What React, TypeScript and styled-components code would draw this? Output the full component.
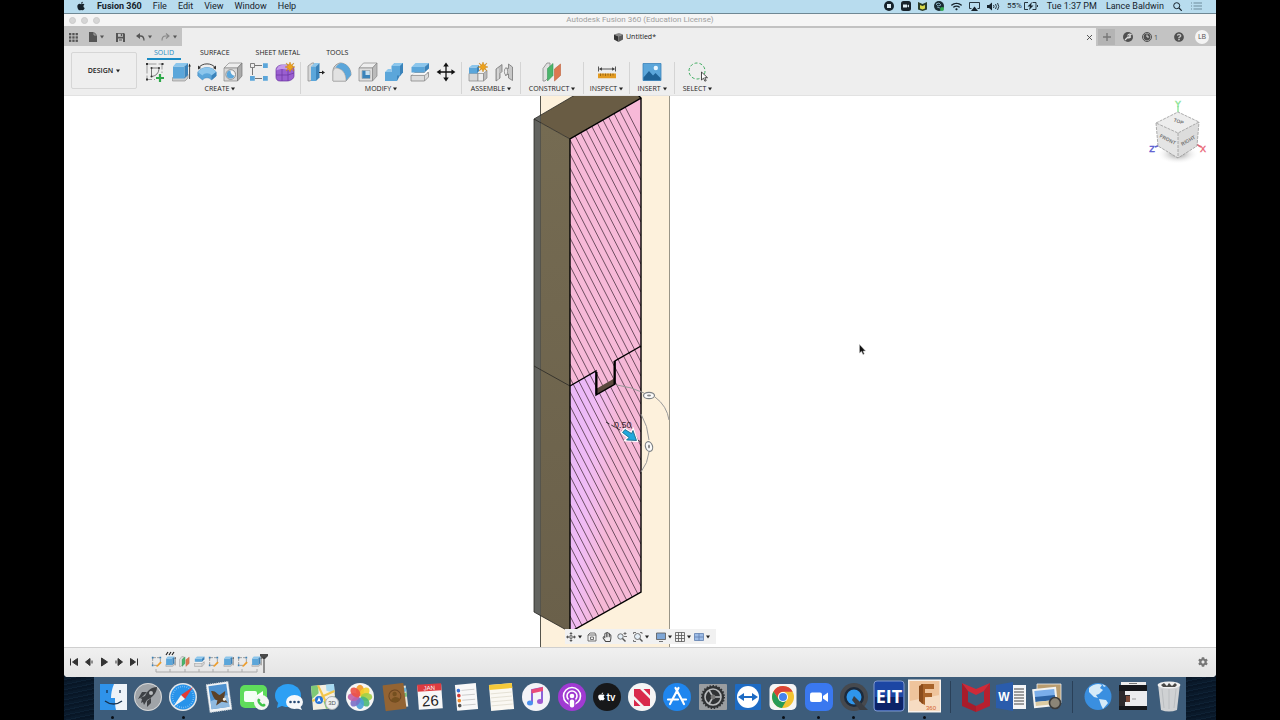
import React from 'react';
import styled, { createGlobalStyle } from 'styled-components';
import { FaApple, FaWifi, FaCog, FaQuestionCircle, FaRegHandPaper } from 'react-icons/fa';

const Global = createGlobalStyle`
  * { box-sizing: border-box; }
  body { margin: 0; background: #000; overflow: hidden; }
  button { border: 0; background: none; padding: 0; margin: 0; color: inherit; font: inherit; }
  svg { display: block; flex: none; }
`;

const system = "Roboto, 'Liberation Sans', sans-serif";
const product = "'Open Sans', 'Noto Sans', sans-serif";

const Screen = styled.div`
  display: flex;
  flex-direction: column;
  min-height: 100vh;
  margin: 0 5%;
  font-family: ${product};
  font-size: 7px;
  color: #222;
  background: #0b1c2e;
`;

/* ---------- system menu bar ---------- */

const MenuBar = styled.header`
  display: flex;
  align-items: center;
  justify-content: space-between;
  height: 14px;
  padding: 0 14px 1px 12px;
  font-family: ${system};
  font-size: 9px;
  line-height: 12px;
  color: #16222b;
  background: #b8dcee;
  border-bottom: 1px solid #6f8894;
`;

const MenuList = styled.nav`
  display: flex;
  align-items: center;
  gap: 11px;
`;

const MenuItem = styled.button<{ $strong?: boolean }>`
  font-weight: ${p => (p.$strong ? 700 : 400)};
  white-space: nowrap;
`;

const StatusList = styled.div<{ $gap: number }>`
  display: flex;
  align-items: center;
  gap: ${p => p.$gap}px;
`;

const Percent = styled.span`
  font-size: 8px;
`;

/* ---------- window chrome ---------- */

const Window = styled.main`
  flex: 1;
  display: flex;
  flex-direction: column;
  background: #eee;
  border-radius: 0 0 4px 4px;
  overflow: hidden;
`;

const TitleBar = styled.div`
  display: grid;
  grid-template-columns: 1fr auto 1fr;
  align-items: center;
  height: 14px;
  padding: 0 5px;
  background: #f5f5f5;
  border-bottom: 2px solid #c2c2c2;
`;

const Lights = styled.div`
  display: flex;
  gap: 5px;
`;

const Light = styled.button`
  width: 7px;
  height: 7px;
  border-radius: 50%;
  background: #d6d6d6;
  border: 1px solid #cbcbcb;
`;

const Title = styled.h1`
  margin: 0;
  font: 400 8px/12px ${system};
  color: #a0a0a0;
`;

const TabBar = styled.div`
  display: flex;
  height: 18px;
  background: #c3c3c3;
`;

const QuickTools = styled.div`
  display: flex;
  align-items: center;
  width: 118px;
  padding-left: 5px;
  color: #555;
`;

const QuickTool = styled.button<{ $after: number }>`
  display: flex;
  align-items: center;
  gap: 3px;
  margin-right: ${p => p.$after}px;
`;

const DocumentTab = styled.div`
  flex: 1;
  display: grid;
  grid-template-columns: 1fr auto 1fr;
  align-items: center;
  padding: 0 2px 0 0;
  background: #eee;
`;

const DocumentName = styled.span`
  grid-column: 2;
  display: flex;
  align-items: center;
  gap: 3px;
  margin-right: 6px;
  font-size: 7px;
  line-height: 10px;
  color: #222;
`;

const CloseButton = styled.button`
  justify-self: end;
  padding: 2px;
`;

const AccountTools = styled.div`
  display: flex;
  align-items: center;
  gap: 8px;
  width: 120px;
  padding: 0 7px 0 2px;
  color: #505050;
`;

const AddTab = styled.button`
  display: grid;
  place-items: center;
  width: 17px;
  height: 16px;
  background: #b4b4b4;
`;

const Jobs = styled.button`
  display: flex;
  align-items: center;
  gap: 2px;
  margin: 0 8px 0 1px;
`;

const Avatar = styled.button`
  width: 14px;
  height: 14px;
  margin-left: auto;
  border-radius: 50%;
  background: #f4f4f4;
  line-height: 14px;
  text-align: center;
`;

/* ---------- ribbon ---------- */

const Ribbon = styled.section`
  display: flex;
  height: 50px;
  padding-left: 7px;
  background: #eee;
  border-bottom: 1px solid #e2e2e2;
`;

const Workspace = styled.button`
  display: flex;
  align-items: center;
  justify-content: center;
  gap: 3px;
  width: 66px;
  height: 37px;
  margin: 6px 3px 0 0;
  font-weight: 600;
  border: 1px solid #d6d6d6;
  border-radius: 2px;
`;

const RibbonBody = styled.div`
  display: flex;
  flex-direction: column;
`;

const RibbonTabs = styled.div`
  display: flex;
  gap: 12px;
  height: 14px;
  padding-left: 7px;
`;

const RibbonTab = styled.button<{ $active?: boolean }>`
  height: 14px;
  padding: 2px 7px 0;
  line-height: 10px;
  white-space: nowrap;
  color: ${p => (p.$active ? '#1c8cc4' : '#222')};
  border-bottom: 2px solid ${p => (p.$active ? '#1c8cc4' : 'transparent')};
`;

const Groups = styled.div`
  display: flex;
  padding-top: 2px;
`;

const Group = styled.div<{ $width: number; $last?: boolean }>`
  display: flex;
  flex-direction: column;
  align-items: center;
  width: ${p => p.$width}px;
  height: 32px;
  border-right: 1px solid ${p => (p.$last ? 'transparent' : '#d4d4d4')};
`;

const GroupIcons = styled.div`
  display: flex;
`;

const IconButton = styled.button`
  display: grid;
  place-items: center;
  width: 26px;
  height: 20px;
`;

const GroupLabel = styled.button`
  display: flex;
  align-items: center;
  gap: 2px;
  padding-top: 2px;
  font-weight: 500;
  line-height: 10px;
  white-space: nowrap;
`;

/* ---------- viewport ---------- */

const Viewport = styled.section`
  position: relative;
  flex: 1;
  min-height: 551px;
  overflow: hidden;
  background: #fff;
`;

const Model = styled.svg`
  position: absolute;
  top: 0;
  left: calc(50% - 110px);
`;

const ViewCube = styled.svg`
  position: absolute;
  top: 2px;
  right: 8px;
`;

const Pointer = styled.svg`
  position: absolute;
  top: 248px;
  left: calc(50% + 219px);
`;

const NavBar = styled.div`
  position: absolute;
  bottom: 3px;
  left: calc(50% - 75px);
  display: flex;
  align-items: center;
  width: 151px;
  height: 15px;
  padding: 0 1px;
  background: #f1f1f1;
`;

const NavButton = styled.button<{ $after: number }>`
  display: flex;
  align-items: center;
  gap: 2px;
  margin-right: ${p => p.$after}px;
`;

/* ---------- timeline ---------- */

const Timeline = styled.footer`
  display: flex;
  align-items: center;
  height: 30px;
  padding: 0 8px 2px 4px;
  color: #333;
  background: linear-gradient(#f0f0f0, #e4e4e4);
  border-top: 1px solid #cfcfcf;
`;

const Playback = styled.div`
  display: flex;
  gap: 3px;
  margin-right: 10px;
`;

const PlayButton = styled.button`
  display: grid;
  place-items: center;
  width: 12px;
  height: 12px;
`;

const History = styled.div`
  position: relative;
  display: flex;
  align-items: center;
  justify-content: space-between;
  width: 113px;
  height: 18px;
`;

const HistoryButton = styled.button`
  display: grid;
  place-items: center;
  width: 12px;
  height: 12px;
`;

const HistoryRail = styled.svg`
  position: absolute;
  left: 0;
  top: -3px;
  pointer-events: none;
`;

const Settings = styled.button`
  margin-left: auto;
  color: #777;
`;

/* ---------- dock ---------- */

const Desktop = styled.div`
  height: 43px;
  padding: 0 30px;
  background: repeating-linear-gradient(168deg, #0a1a2b 0 2px, #0e2134 2px 3px, #081626 3px 5px);
`;

const Dock = styled.nav`
  display: flex;
  height: 43px;
  padding: 4px 0 0 1px;
  background: #3d5c7a;
`;

const DockItem = styled.button<{ $running?: boolean }>`
  flex: 35 1 0;
  display: flex;
  flex-direction: column;
  align-items: center;
  gap: 3px;
  &::after {
    content: '';
    width: 3px;
    height: 3px;
    border-radius: 50%;
    background: ${p => (p.$running ? '#0a0f16' : 'transparent')};
  }
`;

const DockDivider = styled.span`
  flex: 16 1 0;
  display: flex;
  justify-content: center;
  &::before {
    content: '';
    width: 1px;
    height: 32px;
    background: #2a4058;
  }
`;

/* ---------- small drawings ---------- */

const Caret = ({ size = 4 }: { size?: number }) => (
  <svg width={size} height={size} viewBox="0 0 4 4"><path d="M0 .4h4L2 3.6z" fill="currentColor" /></svg>
);

const blue = '#5ba6da';
const deep = '#3b83ba';
const pale = '#8cc6ec';

type DrawingProps = { size?: number };
const icon = (body: React.ReactNode) => ({ size = 20 }: DrawingProps) => (
  <svg width={size} height={size} viewBox="0 0 20 20" fill="none">{body}</svg>
);

const Sketch = icon(<>
  <path d="M2.5 2h14.500v9M2 2.500v15h8" stroke="#777" strokeWidth=".7" strokeDasharray="9 2" />
  <path d="M6.500 6h7.500c0 5-3 8-7.500 8.500z" stroke="#555" strokeWidth=".8" />
  <g fill="#333"><path d="M1 1h2v2H1zM16.500 1h2v2h-2zM1 16.500h2v2H1z" /><circle cx="6.500" cy="6" r="1" /><circle cx="14" cy="6" r="1" /><circle cx="6.500" cy="14.500" r="1" /></g>
  <path d="M15 12v8M11 16h8" stroke="#2fa84a" strokeWidth="2.200" />
</>);
const Extrude = icon(<>
  <path d="M1.500 15.500 14 15.500 17 12.500V16l-3 3H1.500z" fill="#ccc" stroke="#888" strokeWidth=".6" />
  <path d="M2 4.500h11.500v12H2z" fill={blue} /><path d="M2 4.500l3-3.500h12l-3.500 3.500z" fill={pale} /><path d="M13.500 4.500 17 1v12l-3.500 3.500z" fill={deep} />
  <path d="M18.600 17V3.500" stroke="#222" strokeWidth=".8" /><path d="M17.400 4.500 18.600 1.500 19.800 4.500z" fill="#222" />
</>);
const Revolve = icon(<>
  <path d="M1.500 6C5 .5 15 .5 18.500 6" stroke="#333" strokeWidth=".9" /><path d="M1 3.600V7.500L4 6zM19 3.600V7.500L16 6z" fill="#333" />
  <path d="M.8 10C5 4 15 4 19.200 10v4L14.500 18c-2-3-7-3-9 0L.8 14z" fill={blue} stroke={deep} strokeWidth=".5" />
  <path d="M.8 10C5 4 15 4 19.200 10l-4.600 3.500c-2-3-7.200-3-9.200 0z" fill={pale} /><path d="M14.600 13.500l4.600-3.500v4l-4.700 4z" fill={deep} />
</>);
const Hole = icon(<>
  <path d="M1 6 6 1h13l-4.500 5z" fill="#eee" stroke="#888" strokeWidth=".7" /><path d="M1 6h13.500v13H1z" fill="#d8d8d8" stroke="#888" strokeWidth=".7" /><path d="M14.500 6 19 1v13l-4.500 5z" fill="#aaa" stroke="#777" strokeWidth=".7" />
  <circle cx="7.700" cy="12.500" r="4.800" fill="#f4f4f4" stroke="#777" strokeWidth=".8" /><path d="M7.500 8.500a4 4 0 1 0 4 5c-2 0-4-1.500-4-5z" fill={blue} />
</>);
const Pattern = icon(<>
  <path d="M6 3.500h7M3.500 6v7M6 16.500h7" stroke="#555" strokeWidth=".8" />
  <path d="M1.500 1.500h4v4h-4z" fill="#eee" stroke="#666" strokeWidth=".8" />
  <path d="M14 1.300h4.800v4.800H14zM1 14h4.800v4.800H1zM14 14h4.800v4.800H14z" fill={blue} />
</>);
const Star = ({ x, y }: { x: number; y: number }) => (
  <path transform={`translate(${x} ${y})`} d="M0-5 1.200-1.900 4-4 2-1 5 0 2 1 4 4 1.200 1.900 0 5-1.200 1.900-4 4-2 1-5 0-2-1-4-4-1.200-1.900z" fill="#eda21c" stroke="#c07c10" strokeWidth=".4" />
);
const Form = icon(<>
  <path d="M1 8c0-3 3-5 6-5h6c4 0 6 2 6 5v6c0 3-4 5-7 5H5c-3 0-4-2-4-4z" fill="#9a5fd0" stroke="#6c35a2" strokeWidth=".7" />
  <path d="M1.500 8.500C5 6.500 8 6.500 13 8c2-1 4-2 5-2-1-2-4-3-6-3H7C4 3 1.500 6 1.500 8.500z" fill="#c39aea" />
  <path d="M7 7v12M13 8v11M1 13h12l6-2" stroke="#6c35a2" strokeWidth=".7" /><Star x={15} y={5} />
</>);
const PressPull = icon(<>
  <path d="M2 4 6 1h2v15l-4 3H2z" fill="#d6d6d6" stroke="#888" strokeWidth=".7" /><path d="M5 4.500h5V19H5z" fill={blue} /><path d="M5 4.500 8.500 1h5L10 4.500z" fill={pale} /><path d="M10 4.500 13.500 1v14.500L10 19z" fill={deep} />
  <path d="M13 10.500h4" stroke="#222" strokeWidth="1" /><path d="M16 8.500l3 2-3 2z" fill="#222" />
</>);
const Fillet = icon(<>
  <path d="M1 19V9c0-4 3-7 7-8 6 0 11 5 11 12l-5 6z" fill="#d2d2d2" stroke="#888" strokeWidth=".8" />
  <path d="M3.500 5.500C5 3.500 6.500 1.500 9 1c6 .5 10 5.500 10 12l-5 5.500C14 11 10 6.500 3.500 5.500z" fill={blue} /><path d="M3 6c7 0 11 5 11 13H1V9z" fill="#e2e2e2" stroke="#999" strokeWidth=".5" />
</>);
const Shell = icon(<>
  <path d="M1 6 5.500 1H19l-4.500 5z" fill="#eee" stroke="#888" strokeWidth=".7" /><path d="M1 6h13.500v13H1z" fill="#dedede" stroke="#888" strokeWidth=".7" /><path d="M14.500 6 19 1v13l-4.500 5z" fill="#bbb" stroke="#888" strokeWidth=".7" />
  <path d="M4 8.500h8v8H4z" fill="#c8e0f0" stroke="#888" strokeWidth=".5" /><path d="M4.300 8.800h3.200V13H12v3.300H4.300z" fill={deep} />
</>);
const Combine = icon(<>
  <path d="M7.500 4 10.500 1H19v8.500L16 14H7.500z" fill={blue} /><path d="M7.500 4 10.500 1H19l-3 3z" fill={pale} /><path d="M16 4l3-3v9.500L16 14z" fill={deep} />
  <path d="M1 10h12v9H1z" fill={blue} /><path d="M1 10l3-3h3.500v3z" fill={pale} /><path d="M13 13.500h3L13 19z" fill={deep} />
</>);
const Split = icon(<>
  <path d="M1 13.500 5 10.500h13.500V15l-4 4H1z" fill="#ddd" stroke="#888" strokeWidth=".8" /><path d="M1 13.500h13.500V19M14.500 13.500l4-3" stroke="#888" strokeWidth=".7" />
  <path d="M1.500 5h13v5.500h-13z" fill={blue} /><path d="M1.500 5 5.500 1H19l-4.500 4z" fill={pale} /><path d="M14.500 5 19 1v5.500l-4.500 4z" fill={deep} />
  <path d="M1 11.900h13.500L19 8" stroke="#fff" strokeWidth="1.400" />
</>);
const Move = icon(<>
  <path d="M10 3v14M3 10h14" stroke="#111" strokeWidth="1.300" />
  <path d="M10 .6 12.800 4.600H7.200zM10 19.400 12.800 15.400H7.200zM.6 10 4.600 7.200v5.600zM19.400 10 15.400 7.200v5.600z" fill="#111" />
</>);
const Component = icon(<>
  <path d="M1 11.500h9V19H1z" fill="#d8d8d8" stroke="#888" strokeWidth=".7" /><path d="M10 11.500h5.500V19H10z" fill="#eee" stroke="#888" strokeWidth=".7" /><path d="M15.500 11.500 19 8.500V16l-3.500 3z" fill="#bbb" stroke="#888" strokeWidth=".7" />
  <path d="M1 5.500h8v6H1z" fill={blue} /><path d="M1 5.500 4 3h7L9 5.500z" fill={pale} /><path d="M9 5.500 11 3v6l-2 2.500z" fill={deep} /><Star x={15} y={5} />
</>);
const Joint = icon(<>
  <path d="M2 7 8 2.500v7l-2 2V16l-4 3z" fill="#bbb" stroke="#777" strokeWidth=".8" /><path d="M4 6.500v11" stroke="#eee" strokeWidth="1" />
  <path d="M18.500 5v13.500l-4-2.500v-4l-3 1.500V6l3 .5V2z" fill="#c8c8c8" stroke="#777" strokeWidth=".8" /><ellipse cx="12" cy="9.500" rx="1.600" ry="3.600" fill="#eee" stroke="#777" strokeWidth=".7" />
</>);
const Plane = icon(<>
  <path d="M1 6.500 5 1h3v13l-5 5H1z" fill="#e0e0e0" stroke="#888" strokeWidth=".8" /><path d="M5.500 6.500 11 1.500v12L5.500 19z" fill="#4bb56b" stroke="#389455" strokeWidth=".6" />
  <path d="M12.500 7 18.500 2v11.500L12.500 19z" fill="#dc7850" stroke="#bd5e38" strokeWidth=".6" />
</>);
const Measure = icon(<>
  <path d="M1.500 4.500v5M18.500 4.500v5M3 7h14" stroke="#444" strokeWidth=".9" /><path d="M1.800 7 5 5.300v3.400zM18.200 7 15 5.300v3.400z" fill="#444" />
  <path d="M1 11.500h18v4.800H1z" fill="#e39b22" /><path d="M3.500 11.500v2.500M6 11.500v2M8.500 11.500v2.500M11 11.500v2M13.500 11.500v2.500M16 11.500v2" stroke="#8a5c10" strokeWidth=".8" />
</>);
const Picture = icon(<>
  <path d="M1 1.500h18v17H1z" fill={blue} stroke={deep} strokeWidth=".8" /><circle cx="13.800" cy="6" r="2.200" fill="#e8f6ff" /><path d="M1.500 15.500 7 9l4 4.500 2.500-2.500 5 5v2.200h-17z" fill="#1f6397" />
</>);
const Lasso = icon(<>
  <circle cx="9" cy="9" r="8" stroke="#41ad62" strokeWidth="1" strokeDasharray="3 2" /><path d="M13.500 10v8l2-1.800 1.400 3 1.300-.6-1.400-2.900h2.700z" fill="#fff" stroke="#222" strokeWidth=".8" />
</>);
const SketchEdit = icon(<>
  <path d="M3 3h14v8M3 3v14h8" stroke="#777" strokeWidth="1.200" strokeDasharray="6 2" /><path d="M1.500 1.500h3v3h-3zM15.500 1.500h3v3h-3zM1.500 15.500h3v3h-3z" fill={deep} /><path d="M9 18.500 17 10l2.500 2.300L12 19.500z" fill="#ee9d2a" />
</>);

const ribbonTabs = ['SOLID', 'SURFACE', 'SHEET METAL', 'TOOLS'];
const ribbonGroups = [
  { label: 'CREATE', width: 161, icons: [Sketch, Extrude, Revolve, Hole, Pattern, Form] },
  { label: 'MODIFY', width: 161, icons: [PressPull, Fillet, Shell, Combine, Split, Move] },
  { label: 'ASSEMBLE', width: 59, icons: [Component, Joint] },
  { label: 'CONSTRUCT', width: 63, icons: [Plane] },
  { label: 'INSPECT', width: 46, icons: [Measure] },
  { label: 'INSERT', width: 45, icons: [Picture] },
  { label: 'SELECT', width: 46, icons: [Lasso] },
];

const playback: [string, string][] = [
  ['Go to start', 'M2.500 2.500v7M9.500 2.500v7L4.500 6z'],
  ['Step back', 'M7 2.500v7L2.500 6zM9 4.500v3'],
  ['Play', 'M3.500 2v8L9.500 6z'],
  ['Step forward', 'M5 2.500v7L9.500 6zM3 4.500v3'],
  ['Go to end', 'M9.500 2.500v7M2.500 2.500v7l5-3.500z'],
];
const history = [SketchEdit, Extrude, Plane, Split, SketchEdit, Extrude, SketchEdit, Extrude];

const HATCH = Array.from({ length: 48 }, (_, i) => i * 14);

const ModelDrawing = () => (
  <Model width="142" height="551" viewBox="530 96 142 551">
    <defs>
      <linearGradient id="lower" x1="570" x2="610" y1="500" y2="504" gradientUnits="userSpaceOnUse">
        <stop offset="0" stopColor="#ebb9f8" /><stop offset=".4" stopColor="#f1bcf5" /><stop offset="1" stopColor="#f6b8d6" />
      </linearGradient>
      <linearGradient id="side" x1="0" x2="0" y1="0" y2="1"><stop offset="0" stopColor="#756b52" /><stop offset="1" stopColor="#6a604a" /></linearGradient>
      <clipPath id="face"><path d="M570 139 641 98V592L570 632z" /></clipPath>
    </defs>
    <path d="M541 95h128v552H541z" fill="#fdf1dc" />
    <path d="M534 119 541 115V616L534 612z" fill="#62635f" />
    <path d="M541 115 575 95H638L641 98 570 139 541 123z" fill="#695c44" />
    <path d="M541 123 570 139V632L541 616z" fill="url(#side)" />
    <path d="M540.500 95V647" stroke="#55544c" strokeWidth="1" /><path d="M669.500 95V647" stroke="#999588" strokeWidth="1" />
    <path d="M575 95 534 119 570 139M534 119V612L570 632M534 366 570 386" fill="none" stroke="#2a2824" strokeWidth=".8" />
    <path d="M570 139 641 98V592L570 632z" fill="#f7b9d8" />
    <path d="M570 386 596 371V395L615 384V361L641 346V592L570 632z" fill="url(#lower)" />
    <g clipPath="url(#face)" stroke="#4c3443" strokeWidth=".8">
      {HATCH.map(y => <path key={y} d={`M570 ${y}l71 138`} />)}
    </g>
    <path d="M596 389 615 378V384L596 395z" fill="#5b493f" />
    <path d="M570 386 596 371V395L615 384V361L641 346" fill="none" stroke="#000" strokeWidth="1.400" />
    <path d="M596.500 372V394M614.500 361V384" stroke="#000" strokeWidth="2" />
    <path d="M638 95 641 98 570 139V632L641 592V98" fill="none" stroke="#000" strokeWidth="1.400" />
    <g fill="none" stroke="#999" strokeWidth="1"><path d="M617 385Q632 387 644 393M655 397Q667 406 669 420M641 414Q648 426 649 440M649 452Q648 463 641 472" /></g>
    <path d="M606 422 641 442" stroke="#222" strokeWidth=".9" strokeDasharray="4 2" />
    <g fill="#fafafa" stroke="#7c8084" strokeWidth="1.200"><ellipse cx="649" cy="395.500" rx="5.500" ry="3.200" /><ellipse cx="649" cy="446.500" rx="3.500" ry="5" transform="rotate(-18 649 446.500)" /></g>
    <g fill="#888"><ellipse cx="649" cy="395.500" rx="2" ry="1" /><ellipse cx="649" cy="446.500" rx="1" ry="2" /></g>
    <text x="614" y="428" fontFamily="'Liberation Sans', sans-serif" fontSize="9" fill="#3a2632">0.50</text>
    <path d="M622.500 432.500 625 429.500 631.500 433.500 633 430.500 636.500 440.500 626.500 440 629 437.500z" fill="#20a4d4" stroke="#fff" strokeWidth="3" />
    <path d="M622.500 432.500 625 429.500 631.500 433.500 633 430.500 636.500 440.500 626.500 440 629 437.500z" fill="#20a8dc" stroke="#155c7c" strokeWidth=".8" />
  </Model>
);

const CubeDrawing = () => (
  <ViewCube width="60" height="66" viewBox="1148 98 60 66" fontFamily="'Liberation Sans', sans-serif">
    <defs><radialGradient id="shade"><stop offset="0" stopColor="#888" /><stop offset="1" stopColor="#fff" stopOpacity="0" /></radialGradient></defs>
    <ellipse cx="1178" cy="154" rx="21" ry="10" fill="url(#shade)" />
    <path d="M1178 112V106" stroke="#8ee69a" strokeWidth="1.400" /><path d="M1160 145 1155 147" stroke="#6060cc" strokeWidth="1.600" /><path d="M1196 144 1201 147" stroke="#e06878" strokeWidth="1.600" />
    <path d="M1156 123 1178 112 1199 122 1178 133z" fill="#ededed" /><path d="M1156 123 1178 133V158L1158 146z" fill="#e4e4e4" /><path d="M1178 133 1199 122 1197 146 1178 158z" fill="#dcdcdc" />
    <path d="M1156 123 1178 112 1199 122 1178 133zM1156 123 1158 146 1178 158 1197 146 1199 122M1178 133V158" fill="none" stroke="#999" strokeWidth=".8" strokeDasharray="3 1" />
    <g fontSize="5" fill="#777" fontWeight="700" textAnchor="middle">
      <text transform="translate(1178 123) rotate(20)">TOP</text><text transform="translate(1167 141) rotate(27)">FRONT</text><text transform="translate(1189 142) rotate(-30)">RIGHT</text>
    </g>
    <g fontSize="9" textAnchor="middle"><text x="1178" y="107" fill="#7ee08c" stroke="#8ee69a" strokeWidth=".4">Y</text><text x="1152" y="152" fill="#5555cc" stroke="#6262d2" strokeWidth=".4">Z</text><text x="1203" y="152" fill="#e85c70" stroke="#ea6c7c" strokeWidth=".4">X</text></g>
  </ViewCube>
);

/* ---------- dock drawings, 30 × 32 ---------- */

const mono = "'Liberation Sans', sans-serif";
const Disc = ({ fill, children }: { fill: string; children?: React.ReactNode }) => <><circle cx="15" cy="16" r="14" fill={fill} />{children}</>;

type DockEntry = { name: string; art?: React.ReactNode; running?: boolean };
const dock: DockEntry[] = [
  { name: 'Finder', running: true, art: <><path d="M2 3h27v26H2z" fill="#eef3f8" /><path d="M2 3h14c-2 5-3 9-3 14h4c0 5 0 8 1 12H2z" fill="#2f93ea" /><path d="M9 9v3M22 9v3M7 20c5 4 12 4 17 0" stroke="#17324f" strokeWidth="1.300" /></> },
  { name: 'Launchpad', art: <><Disc fill="#a0a4a8" /><circle cx="15" cy="16" r="13.500" fill="none" stroke="#d5d8da" /><path d="M24 6c-6 0-10 4-12 9l-5 2 2 1-1 4 2-1 1 3 3-5c5-2 10-7 10-13z" fill="#3e4145" /><circle cx="18" cy="12" r="2" fill="#b9bcbf" /><path d="M14 20v6l4-4v-5zM9 16l-4 2 4-7h5z" fill="#3e4145" /></> },
  { name: 'Safari', running: true, art: <><Disc fill="#e4e7ea" /><circle cx="15" cy="16" r="12.500" fill="#2893ea" /><circle cx="15" cy="16" r="10.500" fill="none" stroke="#9cd0f8" strokeDasharray=".6 1.600" strokeWidth="1.600" /><path d="M25 6 17 18l-4-4z" fill="#e43a35" /><path d="M5 26 17 18l-4-4z" fill="#f3f3f3" /></> },
  { name: 'Mail', art: <g transform="rotate(-8 15 16)"><path d="M4 2h22v28H4z" fill="#f2f4f6" stroke="#cdd3d9" strokeDasharray="1 1" /><path d="M6 4h18v23H6z" fill="#4d91cf" /><path d="M6 19l18-4v12H6z" fill="#8fb9df" /><path d="M8 9c5 0 6 5 8 5l6-3-2 7 3 5-6-2-6 3 2-5c-3 0-4-5-5-10z" fill="#5b4128" /><circle cx="20" cy="19" r="1.600" fill="#f3efe6" /></g> },
  { name: 'FaceTime', art: <><rect x="1" y="4" width="27" height="23" rx="5" fill="#5fdc5b" /><rect x="5" y="10" width="13" height="11" rx="2" fill="#f5fff5" /><path d="M18 14l6-4v10l-6-3z" fill="#fff" /><circle cx="22.500" cy="21.500" r="7.500" fill="#f4f6f4" /><path d="M18.500 18.500c1-2 2-1 3 .5l-.8 1.500 2.800 2.800 1.500-.8c2 1 2 2 .5 3-4 1-8-4-7-7z" fill="#3fc54a" /></> },
  { name: 'Messages', art: <><ellipse cx="14" cy="14.500" rx="13" ry="11.500" fill="#2da0f4" /><path d="M4 22l-1 5 7-3z" fill="#2da0f4" /><ellipse cx="20.500" cy="21" rx="8.500" ry="7" fill="#f6f8fa" /><path d="M26 25l2 4-6-2z" fill="#f6f8fa" /><g fill="#274a74"><circle cx="16.500" cy="21" r="1.300" /><circle cx="20.500" cy="21" r="1.300" /><circle cx="24.500" cy="21" r="1.300" /></g></> },
  { name: 'Maps', art: <><g transform="rotate(-5 14 16)"><path d="M3 4h23v24H3z" fill="#f3efe2" /><path d="M3 4h7v8l-7 5zM14 20l12-4v12H16z" fill="#7fc976" /><path d="M18 4h8v9l-8-3z" fill="#a6daf2" /><path d="M10 4l9 24M3 19l23-8" stroke="#f2c64b" strokeWidth="2.200" /></g><circle cx="10" cy="19" r="4" fill="#2875d8" /><path d="M10 16l2 5-2-1-2 1z" fill="#fff" /><circle cx="23" cy="22" r="6.500" fill="#eef0f1" stroke="#a9adb0" /><text x="23" y="24" fontFamily={mono} fontSize="6" fill="#555" textAnchor="middle">3D</text></> },
  { name: 'Photos', art: <Disc fill="#f5f5f5">{['#f59a23', '#f4d02c', '#a3cf45', '#4bb878', '#4a9fd8', '#7b6fc6', '#c25fa5', '#ec5146'].map((c, i) => <ellipse key={c} cx="15" cy="9.500" rx="4" ry="5.800" fill={c} fillOpacity=".9" transform={`rotate(${i * 45} 15 16)`} />)}</Disc> },
  { name: 'Contacts', art: <g transform="rotate(-7 15 16)"><path d="M22 6h5v21h-5z" fill="#e8e4da" /><path d="M24 8h3v4h-3z" fill="#6fb5dd" /><path d="M24 13h3v4h-3z" fill="#78c07a" /><rect x="4" y="3" width="21" height="26" rx="1" fill="#936433" /><circle cx="15" cy="15" r="6" fill="none" stroke="#6b4520" /><circle cx="15" cy="13" r="2.200" fill="#75501f" /><path d="M10.500 19c2-4 7-4 9 0-3 3-6 3-9 0z" fill="#75501f" /></g> },
  { name: 'Calendar', art: <g transform="rotate(-4 15 16)"><path d="M3 4h24v24H3z" fill="#f7f7f7" /><path d="M3 3h24v7H3z" fill="#de3b40" /><text x="15" y="9" fontFamily={mono} fontSize="6" fill="#fff" textAnchor="middle">JAN</text><text x="15" y="25" fontFamily={mono} fontSize="15" fill="#222" textAnchor="middle">26</text></g> },
  { name: 'Reminders', art: <g transform="rotate(-5 15 16)"><path d="M5 3h21v26H5z" fill="#f8f8f8" /><path d="M11 9h13M11 14h13M11 19h13M11 24h13" stroke="#ccc" /><circle cx="8" cy="9" r="1.800" fill="#3a72d8" /><circle cx="8" cy="14" r="1.800" fill="#d33a35" /><circle cx="8" cy="19" r="1.800" fill="#ef8a2c" /><circle cx="8" cy="24" r="1.800" fill="#555" /></g> },
  { name: 'Notes', art: <g transform="rotate(-5 15 16)"><path d="M4 3h23v26H4z" fill="#faf8f2" /><path d="M4 3h23v5H4z" fill="#f4c93a" /><path d="M5 12h21M5 16h21M5 20h21M5 24h21" stroke="#ddd8ca" strokeWidth=".7" /></g> },
  { name: 'Music', art: <Disc fill="#f3f3f7"><path d="M11 22V9l10-2v13" fill="none" stroke="#8a62d8" strokeWidth="2" /><path d="M10.500 8.500 22 6v4l-11.500 2.500z" fill="#ea4a78" /><ellipse cx="9" cy="22" rx="3" ry="2.500" fill="#4a90ee" /><ellipse cx="19" cy="20.500" rx="3" ry="2.500" fill="#a058d0" /></Disc> },
  { name: 'Podcasts', art: <Disc fill="#a03ad2"><g fill="none" stroke="#fff" strokeWidth="1.600"><circle cx="15" cy="15" r="8.500" /><circle cx="15" cy="15" r="5" /></g><path d="M11.500 18h7v9h-7z" fill="#a03ad2" /><circle cx="15" cy="15" r="2.300" fill="#fff" /><rect x="12.800" y="18.500" width="4.400" height="8" rx="2" fill="#fff" /></Disc> },
  { name: 'TV', art: <Disc fill="#17181a"><g transform="translate(5 11)"><FaApple size={9} color="#fff" /></g><text x="19" y="20" fontFamily={system} fontSize="11" fontWeight="500" fill="#fff" textAnchor="middle">tv</text></Disc> },
  { name: 'News', art: <Disc fill="#f5f5f5"><path d="M7 8h6l10 10v7h-6L7 15z" fill="#d92a4c" /><path d="M16.500 8H23v6.500zM7 18.500V25h6.500z" fill="#d92a4c" /></Disc> },
  { name: 'App Store', art: <Disc fill="#1f86ef"><g stroke="#fff" strokeWidth="2.200" strokeLinecap="round"><path d="M16.500 7 9 21M13.500 7 21 21M6 18.500h10M20 18.500h4M8 23l.6-1M22 23l-.6-1" /></g></Disc> },
  { name: 'System Preferences', art: <><rect x="1" y="3" width="28" height="26" rx="1" fill="#9a9da0" /><circle cx="15" cy="16" r="11" fill="#303234" stroke="#303234" strokeWidth="2" strokeDasharray="1.500 1.500" /><circle cx="15" cy="16" r="8" fill="none" stroke="#b8babc" strokeWidth="1.600" /><path d="M15 16h8M15 16l-4-7M15 16l-4 7" stroke="#b8babc" strokeWidth="1.600" /><circle cx="15" cy="16" r="2.400" fill="#777" /></> },
  { name: 'TeamViewer', art: <><rect x="2" y="3" width="26" height="26" rx="1" fill="#1d6bc4" /><circle cx="15" cy="16" r="11" fill="#fff" /><path d="M5 16l6-4v3h8v-3l6 4-6 4v-3h-8v3z" fill="#1d6bc4" /></> },
  { name: 'Chrome', running: true, art: <><rect x="1.500" y="3" width="27" height="26" rx="5" fill="#f5f5f5" /><circle cx="15" cy="16" r="11" fill="#f3c230" /><path d="M5.500 10.500A11 11 0 0 1 24.700 10.800H15a5 5 0 0 0-4.600 7.300z" fill="#da4437" /><path d="M5.500 10.500A11 11 0 0 0 14 27l4.500-8a5 5 0 0 1-8-1z" fill="#279b57" /><circle cx="15" cy="16" r="5" fill="#fff" /><circle cx="15" cy="16" r="4" fill="#4583ec" /></> },
  { name: 'Zoom', running: true, art: <><rect x="1" y="2" width="28" height="28" rx="7" fill="#3a78ef" /><rect x="6" y="11.500" width="12" height="9.500" rx="2" fill="#fff" /><path d="M19 15l5-3.500v9.500l-5-3.500z" fill="#fff" /></> },
  { name: 'QuickTime Player', running: true, art: <Disc fill="#46494e"><circle cx="15" cy="16" r="10" fill="#1c2a3c" /><circle cx="15" cy="16" r="7.500" fill="#2f95ea" /><path d="M15 15 29 29h-8l-8-10z" fill="#3a3d42" /></Disc> },
  { name: 'EIT', art: <><rect x="0" y="0" width="30" height="30" rx="3" fill="#1c46a4" stroke="#7f97cc" /><path d="M1 16h28v11q0 2-2 2H3q-2 0-2-2z" fill="#0d2368" /><text x="15" y="22" fontFamily={product} fontSize="18" fontWeight="700" fill="#fff" textAnchor="middle">EIT</text></> },
  { name: 'Fusion 360', running: true, art: <><path d="M-1-1.500h33v33H-1z" fill="#f8f2ec" /><path d="M.5 0h30v30H.5z" fill="#efc49c" /><path d="M.5 20l30-6v16H.5z" fill="#f6dcc2" /><path d="M12 3h13v5H16v4h7v4h-7v8l-4-2z" fill="#a8632a" /><path d="M10 5l4-2v20l-4-3z" fill="#8a4c1c" /><text x="22" y="29" fontFamily={mono} fontSize="6" fill="#d35d2c" textAnchor="middle">360</text></> },
  { name: '|1' },
  { name: 'McAfee', art: <><path d="M1 2 7 10V21L15 25V31L1 25z" fill="#a81c2a" /><path d="M1 2 15 8 29 2 23 10 15 14 7 10z" fill="#d02a38" /><path d="M29 2V25L15 31V25L23 21V10z" fill="#b8202f" /></> },
  { name: 'Word', art: <><path d="M14 4h16v24H14z" fill="#f4f5f7" /><path d="M18 8h10M18 11h10M18 14h10M18 17h10M18 20h10M18 23h10" stroke="#444" /><path d="M0 4 17 1v29L0 27z" fill="#2a5cac" /><text x="8" y="20" fontFamily={mono} fontSize="12" fontWeight="700" fill="#fff" textAnchor="middle">W</text></> },
  { name: 'Preview', art: <><path d="M5 3h24v19H5z" fill="#b99d70" stroke="#eee" strokeWidth=".8" /><g transform="rotate(-6 13 16)"><path d="M1 7h24v19H1z" fill="#f3f3f1" /><path d="M3 9h20v7H3z" fill="#7aaeea" /><path d="M3 15h20v5H3z" fill="#2c62a2" /><path d="M3 20h20v4H3z" fill="#dccba2" /></g><circle cx="23" cy="22" r="5.500" fill="#8b8577" stroke="#3b3b3b" strokeWidth="1.600" /></> },
  { name: '|2' },
  { name: 'Web', art: <><circle cx="15" cy="15.500" r="13.500" fill="#3a8fe0" /><path d="M6 7c4-4 10-5 13-3l-2 3 3 2-4 4-3 1 2 3-4-1-5-5zM19 3l4 2-2 1zM16 18l7 1 2 3-5 6-2-4z" fill="#d5eaf8" /></> },
  { name: 'Minimized window', art: <><path d="M3 1h25v5H3z" fill="#ececec" /><path d="M11 2h8v1h-8z" fill="#777" /><path d="M1 4h28v25H1z" fill="#15171b" /><path d="M1 10h28v15H1z" fill="#ebecee" /><path d="M1 10h6v15H1zM7 14h5v7H7z" fill="#2d2a2c" /><path d="M8 15h4v6H8z" fill="#7b4a38" /><path d="M14 18h4" stroke="#999" /></> },
  { name: 'Trash', art: <><path d="M4 3h22l-3 26q-8 3-16 0z" fill="#cfd1d3" /><path d="M8 8l2 19M15 8v20M22 8l-2 19" stroke="#bbbec1" /><ellipse cx="15" cy="4" rx="11.500" ry="3.500" fill="#f0f1f1" /><path d="M7 4l3-2 3 3 2-3 3 3 3-3 2 2-2 2H9z" fill="#4a4a48" /></> },
];

const nav: [string, React.ReactNode, number, boolean][] = [
  ['Orbit', <><path d="M2 5q3-3 6 0M2 5q3 3 6 0M5 2v6" /><path d="M5 0 3.300 2h3.400zM5 10 3.300 8h3.400zM0 5l2-1.700v3.400zM10 5 8 3.300v3.400z" fill="#555" stroke="none" /></>, 5, true],
  ['Look at', <path d="M1 3h8v6H1zM1 3 3 1h5l1 2M3.500 5h3v2.500h-3z" />, 5, false],
  ['Pan', <g stroke="none"><FaRegHandPaper size={10} color="#444" /></g>, 5, false],
  ['Zoom', <><circle cx="3.500" cy="4.500" r="2.700" fill="#e4eef6" /><path d="M5.500 6.500 8.500 9.500" strokeWidth="1.400" /><path d="M8 0v3M6.500 1.500h3M7 4.500h3" /></>, 6, false],
  ['Fit', <><circle cx="4.500" cy="4.500" r="3" fill="#e4eef6" /><path d="M6.800 6.800 9.500 9.500" strokeWidth="1.400" /><path d="M.5 2V.5H3M7 .5h2V2M.5 8v1.500H3" /></>, 7, true],
  ['Display', <g><path d="M.5 1h9v6.500h-9z" fill="#7ea6d6" /><path d="M3 9.500h4" /></g>, 3, true],
  ['Grid', <path d="M.5.500h9v9h-9zM.5 3.500h9M.5 6.500h9M3.500.500v9M6.500.500v9" />, 3, true],
  ['Layout', <g stroke="#5f7fae"><path d="M.5 1.500h9v7h-9z" fill="#9dbce6" /><path d="M5 1.500v7M.5 5h9" /></g>, 0, true],
];

export default function App() {
  return (
    <>
      <Global />
      <Screen>
        <MenuBar>
          <MenuList aria-label="Application menu">
            <FaApple size={10} />
            {['Fusion 360', 'File', 'Edit', 'View', 'Window', 'Help'].map((m, i) => <MenuItem key={m} $strong={i === 0}>{m}</MenuItem>)}
          </MenuList>
          <StatusList $gap={9}>
            <StatusList $gap={7}>
              <svg width="10" height="10" viewBox="0 0 10 10"><circle cx="5" cy="5" r="5" fill="#16222b" /><path d="M3 3h4v4H3z" fill="#dcecf4" /></svg>
              <svg width="10" height="10" viewBox="0 0 10 10"><rect width="10" height="10" rx="2.500" fill="#16222b" /><path d="M2 3.500h4v3H2zM6.500 4.500 8 3.500v3l-1.500-1z" fill="#dcecf4" /></svg>
              <svg width="9" height="9" viewBox="0 0 9 9"><path d="M0 0l4.500 2L9 0v7.500L4.500 9 0 7.500z" fill="#2a3c2a" /><path d="M2 3l2.500 1L7 3v3.500l-2.500 1-2.500-1z" fill="#d8d94a" /></svg>
              <svg width="10" height="10" viewBox="0 0 10 10"><circle cx="5" cy="5" r="5" fill="#1b2b34" /><path d="M2 3l3-1 2 2-3 1zM3 6l3 1" stroke="#7ea2b4" fill="none" /><circle cx="8" cy="8" r="2" fill="#2ea84a" /></svg>
              <FaWifi size={11} />
              <svg width="11" height="9" viewBox="0 0 11 9"><path d="M2.500 6.500H.5v-6h10v6h-2" fill="none" stroke="#16222b" strokeWidth=".9" /><path d="M5.500 4.500 9 9H2z" fill="#16222b" /></svg>
              <svg width="13" height="9" viewBox="0 0 13 9" fill="none" stroke="#16222b" strokeWidth=".9"><path d="M0 3h2l3-2.500v8L2 6H0z" fill="#16222b" stroke="none" /><path d="M6.500 3q1 1.500 0 3M8.500 2q1.800 2.500 0 5M10.500 1q2.500 3.500 0 7" /></svg>
              <StatusList $gap={2}>
                <Percent>55%</Percent>
                <svg width="14" height="8" viewBox="0 0 14 8"><path d="M4 .5H.5v7H4M8.500.500H12v7H8.500M13.500 3v2" fill="none" stroke="#16222b" strokeWidth=".9" /><path d="M8 0 3.500 4.500H6L5 8l4.500-4.500H7z" fill="#16222b" /></svg>
              </StatusList>
            </StatusList>
            <span>Tue 1:37 PM</span>
            <span>Lance Baldwin</span>
            <svg width="9" height="9" viewBox="0 0 9 9" fill="none" stroke="#16222b"><circle cx="3.700" cy="3.700" r="3" /><path d="M6 6l2.800 2.800" strokeWidth="1.200" /></svg>
            <svg width="11" height="8" viewBox="0 0 11 8"><path d="M2.500 1H11M2.500 4H11M2.500 7H11M0 1h1M0 4h1M0 7h1" stroke="#6d8b9b" /></svg>
          </StatusList>
        </MenuBar>

        <Window>
          <TitleBar>
            <Lights><Light aria-label="Close" /><Light aria-label="Minimize" /><Light aria-label="Full screen" /></Lights>
            <Title>Autodesk Fusion 360 (Education License)</Title>
          </TitleBar>
          <TabBar>
            <QuickTools>
              <QuickTool $after={11} aria-label="Data panel"><svg width="9" height="9" viewBox="0 0 9 9" fill="currentColor">{[0, 3.3, 6.6].map(y => [0, 3.3, 6.6].map(x => <rect key={`${x}${y}`} x={x} y={y} width="2.300" height="2.300" />))}</svg></QuickTool>
              <QuickTool $after={12} aria-label="File"><svg width="8" height="10" viewBox="0 0 8 10"><path d="M0 0h5l3 3v7H0z" fill="currentColor" /><path d="M5 0v3h3" stroke="#c3c3c3" fill="none" strokeWidth=".7" /></svg><Caret /></QuickTool>
              <QuickTool $after={11} aria-label="Save"><svg width="9" height="9" viewBox="0 0 9 9"><path d="M0 0h8l1 1v8H0z" fill="currentColor" /><path d="M2 .8h5v3H2zM2 5.500h5V9H2z" fill="#c3c3c3" /><path d="M4.800 1h1.400v2H4.800zM3 6.500h3v1H3z" fill="currentColor" /></svg></QuickTool>
              <QuickTool $after={9} aria-label="Undo"><svg width="9" height="8" viewBox="0 0 9 8" fill="none" stroke="currentColor" strokeWidth="1.300"><path d="M1 3h3.500Q8 3 8 7.500" /><path d="M4 0v6L0 3z" fill="currentColor" stroke="none" /></svg><Caret /></QuickTool>
              <QuickTool $after={0} aria-label="Redo"><svg width="9" height="8" viewBox="0 0 9 8" fill="none" stroke="#888" strokeWidth="1.100"><path d="M8 3H4.500Q1 3 1 7.500M5 .5 8 3 5 5.500" /></svg><Caret /></QuickTool>
            </QuickTools>
            <DocumentTab>
              <DocumentName>
                <svg width="9" height="9" viewBox="0 0 9 9"><path d="M0 1.500 5 0l4 1.500-4.500 2z" fill="#888" /><path d="M0 1.500 4.500 3.500V9L0 6.500z" fill="#333" /><path d="M4.500 3.500 9 1.500v5L4.500 9z" fill="#5c5c5c" /></svg>
                Untitled*
              </DocumentName>
              <CloseButton aria-label="Close document"><svg width="5" height="5" viewBox="0 0 5 5"><path d="M0 0l5 5M5 0 0 5" stroke="#444" strokeWidth=".9" /></svg></CloseButton>
            </DocumentTab>
            <AccountTools>
              <AddTab aria-label="New document"><svg width="8" height="8" viewBox="0 0 8 8"><path d="M4 0v8M0 4h8" stroke="#777" strokeWidth="1.400" /></svg></AddTab>
              <QuickTool $after={0} aria-label="Extensions"><svg width="10" height="10" viewBox="0 0 10 10"><circle cx="5" cy="5" r="5" fill="currentColor" /><path d="M2 8 5.500 4.500M4.500 3.500Q6 1.500 8 2.500L6.500 4 7.500 5Q6 6.500 4.500 5.500" stroke="#ddd" strokeWidth="1.200" fill="none" /></svg></QuickTool>
              <Jobs aria-label="Job status"><svg width="10" height="10" viewBox="0 0 10 10"><circle cx="5" cy="5" r="4.500" fill="none" stroke="currentColor" /><circle cx="5" cy="5" r="3.400" fill="currentColor" /><path d="M5 2.500V5h2" stroke="#ddd" fill="none" /></svg>1</Jobs>
              <QuickTool $after={0} aria-label="Help"><FaQuestionCircle size={10} /></QuickTool>
              <Avatar>LB</Avatar>
            </AccountTools>
          </TabBar>

          <Ribbon>
            <Workspace>DESIGN <Caret /></Workspace>
            <RibbonBody>
              <RibbonTabs>{ribbonTabs.map((t, i) => <RibbonTab key={t} $active={i === 0}>{t}</RibbonTab>)}</RibbonTabs>
              <Groups>
                {ribbonGroups.map(g => (
                  <Group key={g.label} $width={g.width} $last={g.label === 'SELECT'}>
                    <GroupIcons>{g.icons.map((Icon, i) => <IconButton key={i} aria-label={`${g.label} ${i + 1}`}><Icon /></IconButton>)}</GroupIcons>
                    <GroupLabel>{g.label} <Caret /></GroupLabel>
                  </Group>
                ))}
              </Groups>
            </RibbonBody>
          </Ribbon>

          <Viewport>
            <ModelDrawing />
            <CubeDrawing />
            <Pointer width="7" height="11" viewBox="0 0 7 11"><path d="M.5.500v8.500l2-1.800L4 10.500l1.300-.6L4 7h2.500z" fill="#111" stroke="#bbb" strokeWidth=".5" /></Pointer>
            <NavBar>
              {nav.map(([name, art, after, menu]) => (
                <NavButton key={name} $after={after} aria-label={name}>
                  <svg width="10" height="10" viewBox="0 0 10 10" fill="none" stroke="#555" strokeWidth=".8">{art}</svg>
                  {menu && <Caret />}
                </NavButton>
              ))}
            </NavBar>
          </Viewport>

          <Timeline>
            <Playback>
              {playback.map(([name, d]) => <PlayButton key={name} aria-label={name}><svg width="12" height="12" viewBox="0 0 12 12"><path d={d} fill="currentColor" stroke="currentColor" /></svg></PlayButton>)}
            </Playback>
            <History>
              {history.map((Icon, i) => <HistoryButton key={i} aria-label={`Feature ${i + 1}`}><Icon size={11} /></HistoryButton>)}
              <HistoryRail width="122" height="28" viewBox="0 0 122 28">
                <path d="M6 19v3h101v-3M20 19v3M35 19v3M49 19v3M63 19v3M78 19v3M92 19v3" fill="none" stroke="#aaa" />
                <path d="M16 5l2-3M19 5l2-3M22 5l2-3" stroke="#222" strokeWidth="1.200" />
                <path d="M110 4h8v2l-3 3h-2l-3-3z" fill="#4a4a4a" /><path d="M114 7v16" stroke="#333" />
              </HistoryRail>
            </History>
            <Settings aria-label="Settings"><FaCog size={10} /></Settings>
          </Timeline>
        </Window>

        <Desktop>
          <Dock aria-label="Dock">
            {dock.map(d => d.art
              ? <DockItem key={d.name} aria-label={d.name} $running={d.running}><svg width="30" height="32" viewBox="0 0 30 32" overflow="visible" fill="none">{d.art}</svg></DockItem>
              : <DockDivider key={d.name} />)}
          </Dock>
        </Desktop>
      </Screen>
    </>
  );
}
